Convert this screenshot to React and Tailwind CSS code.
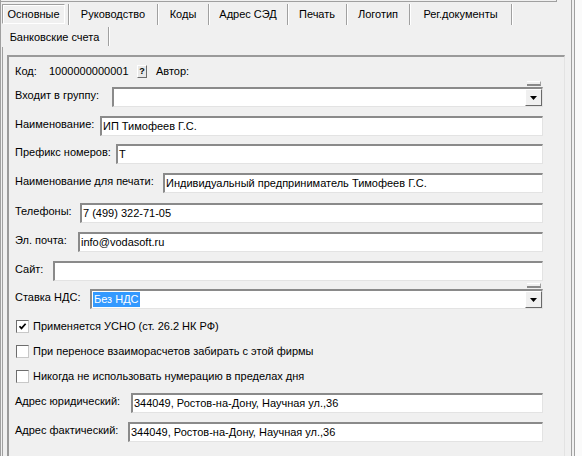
import React from 'react';

const fieldBox =
  'bg-white border-t-2 border-l-2 border-t-[#8a8a8a] border-l-[#8a8a8a] border-b border-r border-b-[#e3e3e3] border-r-[#e3e3e3]';

function Field({ value, className = '' }) {
  return (
    <div className={`h-[20px] flex-1 flex items-center pl-[1px] whitespace-nowrap overflow-hidden ${fieldBox} ${className}`}>
      {value}
    </div>
  );
}

function Combo({ children }) {
  return (
    <div className={`relative h-[20px] flex-1 flex items-center pl-[1px] whitespace-nowrap ${fieldBox}`}>
      {children}
      <div className="absolute -top-[8px] right-[1px] w-[14px] h-[5px] bg-[#f0f0f0] border-t border-t-white border-b-2 border-b-[#8a8a8a] border-r border-r-[#a0a0a0]" />
      <div className="absolute top-0 bottom-0 right-0 w-[17px] bg-[#f0f0f0] border border-t-white border-l-white border-b-[#696969] border-r-[#696969] flex items-center justify-center">
        <svg width="7" height="4" viewBox="0 0 7 4">
          <path d="M0 0H7L3.5 4Z" fill="#000" />
        </svg>
      </div>
    </div>
  );
}

function Row({ label, labelWidth, mt, children }) {
  return (
    <div className={`flex items-center h-[20px] pl-[6px] pr-[21px] ${mt}`}>
      <span className={`shrink-0 pb-[3px] whitespace-nowrap ${labelWidth}`}>{label}</span>
      {children}
    </div>
  );
}

function Check({ checked, label, mt }) {
  return (
    <div className={`flex items-center h-[13px] pl-[7px] ${mt}`}>
      <div className="w-[13px] h-[13px] bg-white border border-t-[#6d6d6d] border-l-[#6d6d6d] border-b-[#c8c8c8] border-r-[#c8c8c8] flex items-center justify-center">
        {checked && (
          <svg width="9" height="9" viewBox="0 0 9 9">
            <path d="M1.5 4.2L3.5 6.4L7.6 1.8" fill="none" stroke="#000" strokeWidth="1.7" />
          </svg>
        )}
      </div>
      <span className="ml-[4px] whitespace-nowrap">{label}</span>
    </div>
  );
}

const tabsRow1 = [
  { label: 'Руководство', w: 'w-[89px]' },
  { label: 'Коды', w: 'w-[51px]' },
  { label: 'Адрес СЭД', w: 'w-[79px]' },
  { label: 'Печать', w: 'w-[59px]' },
  { label: 'Логотип', w: 'w-[63px]' },
  { label: 'Рег.документы', w: 'w-[102px]' },
];

const sep = 'border-r border-r-[#a0a0a0] shadow-[1px_0_0_#ffffff]';

export default function App() {
  return (
    <div className="w-[582px] h-[456px] overflow-hidden bg-[#f0f0f0] flex font-['Liberation_Sans',Arial,sans-serif] text-[11px] text-black">
      <div className="w-[571px] shrink-0 flex flex-col border-l border-l-[#a0a0a0]">
        <div className="h-[2px] w-[556px] shrink-0 border-b border-r border-[#a0a0a0]" />

        <div className="h-[23px] shrink-0 flex items-end">
          <div className={`w-[68px] h-[21px] flex items-start ${sep}`}>
            <div className="ml-[1px] w-[63px] h-[20px] flex items-center justify-center border border-t-[#a0a0a0] border-l-[#a0a0a0] border-b-white border-r-white shadow-[inset_1px_1px_0_#ffffff]">
              Основные
            </div>
          </div>
          {tabsRow1.map((t) => (
            <div key={t.label} className={`${t.w} h-[21px] flex items-center justify-center whitespace-nowrap ${sep}`}>
              {t.label}
            </div>
          ))}
        </div>

        <div className="h-[22px] shrink-0 flex items-start pt-[2px]">
          <div className={`w-[108px] h-[19px] flex items-center justify-center pt-[1px] whitespace-nowrap ${sep}`}>
            Банковские счета
          </div>
        </div>

        <div className="flex-1 ml-[1px] border-l border-l-[#a0a0a0] pt-[8px]">
          <div className="ml-[4px] w-[558px] h-[420px] border-t-2 border-l-2 border-t-[#9a9a9a] border-l-[#9a9a9a] border-r border-r-[#e3e3e3] flex flex-col">
            <div className="flex items-center h-[14px] pl-[6px] mt-[7px]">
              <span className="w-[34px]">Код:</span>
              <span className="w-[88px]">1000000000001</span>
              <div className="w-[10px] h-[13px] bg-[#e8e8e8] border border-t-white border-l-white border-b-[#6d6d6d] border-r-[#6d6d6d] flex items-center justify-center text-[9px] font-bold leading-none">
                ?
              </div>
              <span className="ml-[9px]">Автор:</span>
            </div>

            <Row label="Входит в группу:" labelWidth="w-[97px]" mt="mt-[9px]">
              <Combo />
            </Row>
            <Row label="Наименование:" labelWidth="w-[85px]" mt="mt-[9px]">
              <Field value="ИП Тимофеев Г.С." />
            </Row>
            <Row label="Префикс номеров:" labelWidth="w-[101px]" mt="mt-[8px]">
              <Field value="Т" />
            </Row>
            <Row label="Наименование для печати:" labelWidth="w-[148px]" mt="mt-[9px]">
              <Field value="Индивидуальный предприниматель Тимофеев Г.С." />
            </Row>
            <Row label="Телефоны:" labelWidth="w-[65px]" mt="mt-[10px]">
              <Field value="7 (499) 322-71-05" />
            </Row>
            <Row label="Эл. почта:" labelWidth="w-[63px]" mt="mt-[9px]">
              <Field value="info@vodasoft.ru" />
            </Row>
            <Row label="Сайт:" labelWidth="w-[38px]" mt="mt-[9px]">
              <Field value="" />
            </Row>
            <Row label="Ставка НДС:" labelWidth="w-[75px]" mt="mt-[8px]">
              <Combo>
                <span className="bg-[#3399ff] text-white h-[15px] flex items-center px-[1px]">Без НДС</span>
              </Combo>
            </Row>

            <Check checked label="Применяется УСНО (ст. 26.2 НК РФ)" mt="mt-[11px]" />
            <Check label="При переносе взаиморасчетов забирать с этой фирмы" mt="mt-[12px]" />
            <Check label="Никогда не использовать нумерацию в пределах дня" mt="mt-[12px]" />

            <Row label="Адрес юридический:" labelWidth="w-[116px]" mt="mt-[10px]">
              <Field value="344049, Ростов-на-Дону, Научная ул.,36" />
            </Row>
            <Row label="Адрес фактический:" labelWidth="w-[113px]" mt="mt-[9px]">
              <Field value="344049, Ростов-на-Дону, Научная ул.,36" />
            </Row>
          </div>
        </div>
      </div>

      <div className="w-px shrink-0 bg-[#a0a0a0]" />
      <div className="w-[2px] shrink-0 bg-[#f0f0f0]" />
      <div className="w-px shrink-0 bg-[#a0a0a0]" />
      <div className="flex-1 bg-[#fafafa]" />
    </div>
  );
}
